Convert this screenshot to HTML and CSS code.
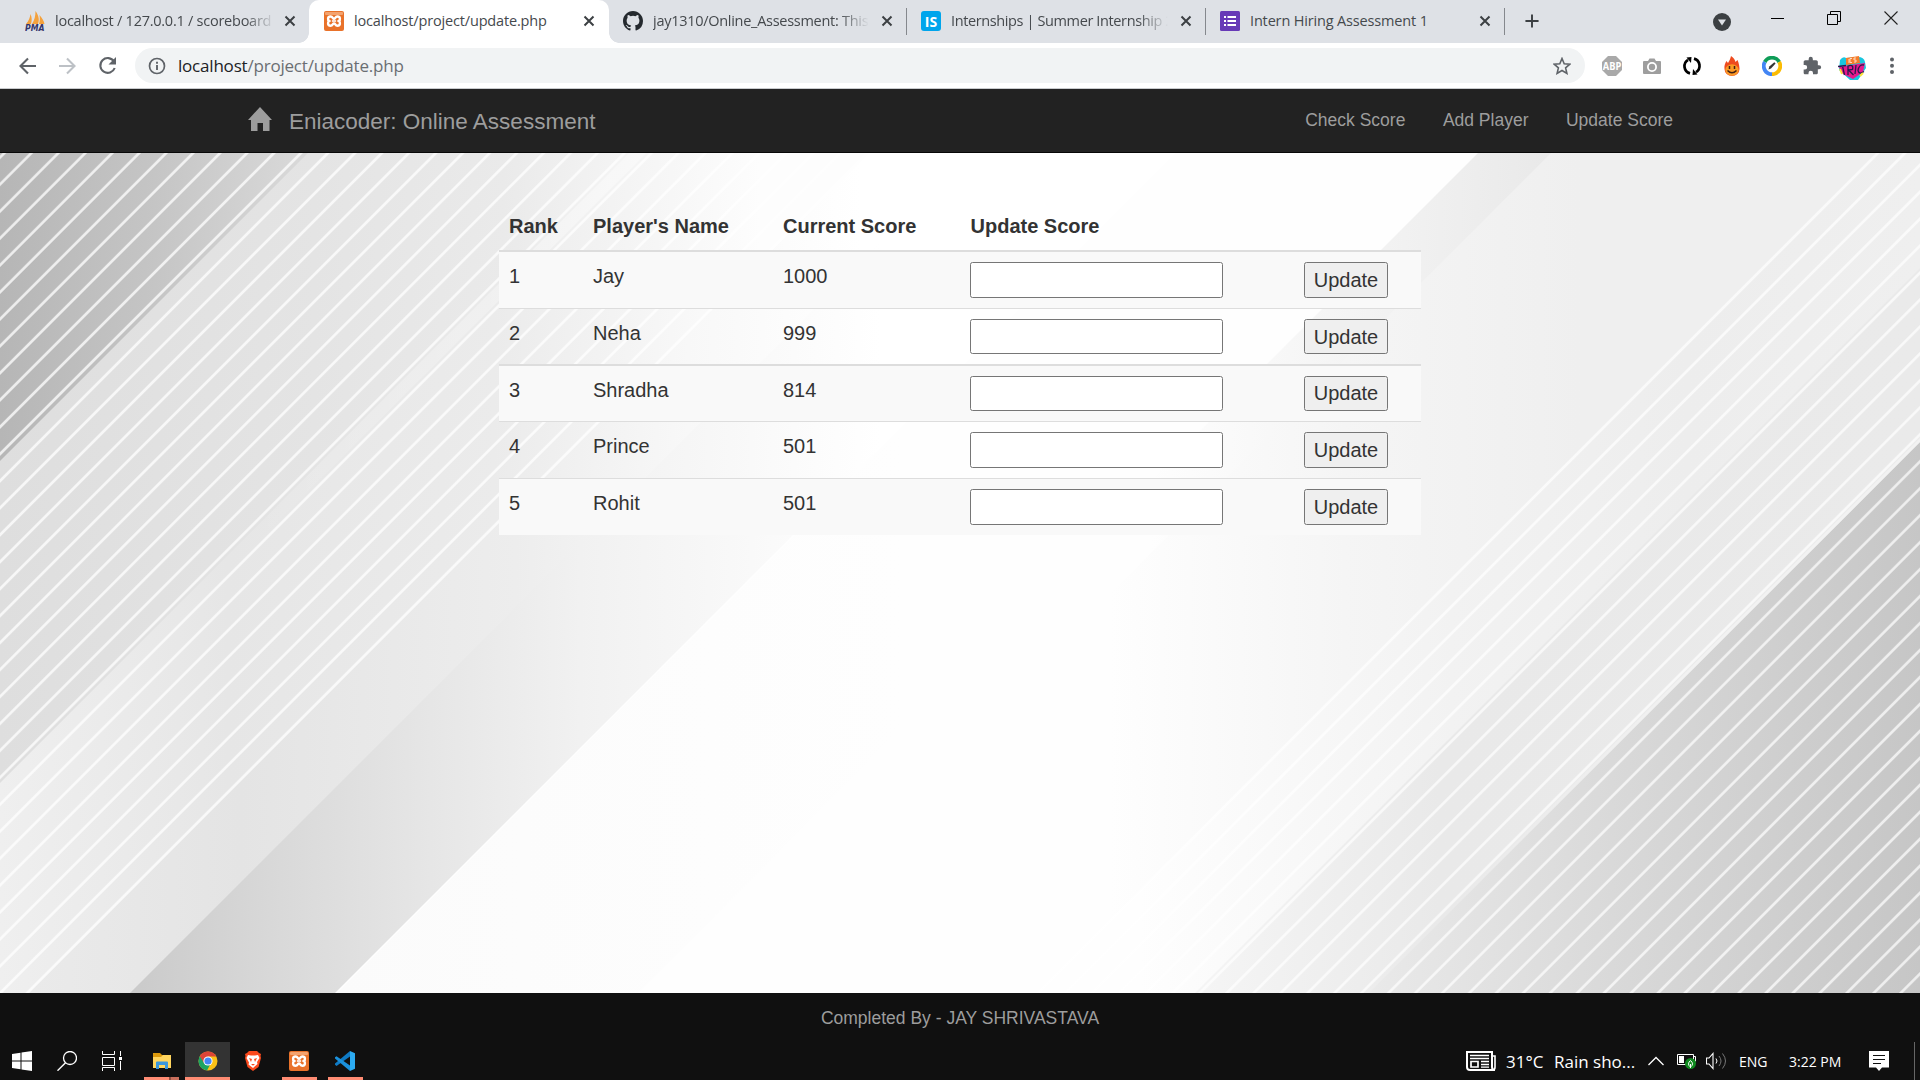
FILE: index.html
```html
<!DOCTYPE html>
<html lang="en">
<head>
<meta charset="utf-8">
<title>localhost/project/update.php</title>
<link rel="stylesheet" href="styles.css">
</head>
<body>
<svg class="defs" width="0" height="0" aria-hidden="true">
  <defs>
    <symbol id="x" viewBox="0 0 12 12"><path d="M1.500 1.500l9 9M10.500 1.500l-9 9" stroke="#3c4043" stroke-width="2" fill="none"/></symbol>
    <symbol id="xampp" viewBox="0 0 20 20"><rect width="20" height="20" rx="2" fill="#e9722a"/><rect x="1" y="1" width="18" height="3" rx="1" fill="#f3a36f"/><path d="M6.500 5.500C3.500 5.500 3.500 9 5.200 10C3.500 11 3.500 14.800 6.500 14.800C9 14.800 8.500 12.500 10 12.500S11 14.800 13.500 14.800C16.500 14.800 16.500 11 14.800 10C16.500 9 16.500 5.500 13.500 5.500C11 5.500 11.500 7.800 10 7.800S9 5.500 6.500 5.500Z" fill="none" stroke="#fff" stroke-width="2.400"/><path d="M8 10h4" stroke="#fff" stroke-width="1.600"/></symbol>
  </defs>
</svg>
<div class="screen">
  <header class="tabs">
    <div class="tab first"><svg class="fav" viewBox="0 0 20 20"><path d="M1 13C4 10 5 6 5.500 3C7 6 7 10 6 13ZM7 13C9.500 9 10.500 5 10.500 0C14 5 14.500 9 13 13ZM14 13C15 10 15 7 14.500 4C17 7 19 10 19.500 13Z" fill="#f4a13c"/><text x="0" y="19.500" class="pma" textLength="19.500" lengthAdjust="spacingAndGlyphs">PMA</text></svg><span class="label fade t1">localhost / 127.0.0.1 / scoreboard</span><svg class="close"><use href="#x"/></svg></div>
    <div class="tab active"><svg class="fav" viewBox="0 0 20 20"><use href="#xampp"/></svg><span class="label t2">localhost/project/update.php</span><svg class="close"><use href="#x"/></svg></div>
    <div class="tab sep third"><svg class="fav" viewBox="0 0 16 16"><path fill="#24292e" d="M8 0C3.580 0 0 3.580 0 8c0 3.540 2.290 6.530 5.470 7.590.4.070.55-.17.55-.38 0-.19-.01-.82-.01-1.490-2.010.37-2.530-.49-2.690-.94-.09-.23-.48-.94-.82-1.130-.28-.15-.68-.52-.01-.53.63-.01 1.080.58 1.230.82.72 1.210 1.870.87 2.330.66.07-.52.28-.87.51-1.070-1.780-.2-3.640-.89-3.640-3.950 0-.87.31-1.590.82-2.150-.08-.2-.36-1.020.08-2.120 0 0 .67-.21 2.200.82a7.600 7.600 0 0 1 4 0c1.530-1.040 2.200-.82 2.200-.82.44 1.100.16 1.920.08 2.120.51.56.82 1.270.82 2.150 0 3.070-1.870 3.750-3.650 3.950.29.25.54.73.54 1.480 0 1.070-.01 1.930-.01 2.200 0 .21.15.46.55.38A8 8 0 0 0 16 8c0-4.420-3.580-8-8-8z"/></svg><span class="label fade t3">jay1310/Online_Assessment: This</span><svg class="close"><use href="#x"/></svg></div>
    <div class="tab sep"><svg class="fav" viewBox="0 0 20 20"><rect width="20" height="20" rx="3" fill="#00a5ec"/><text x="10" y="15.500" text-anchor="middle" class="is">IS</text></svg><span class="label fade t4">Internships | Summer Internship 2</span><svg class="close"><use href="#x"/></svg></div>
    <div class="tab sep"><svg class="fav" viewBox="0 0 20 20"><rect width="20" height="20" rx="1.500" fill="#673ab7"/><path d="M4 6h2M4 10h2M4 14h2M7.500 6H16M7.500 10H16M7.500 14H16" stroke="#fff" stroke-width="2.200"/></svg><span class="label t2">Intern Hiring Assessment 1</span><svg class="close"><use href="#x"/></svg></div>
    <svg class="plus" viewBox="0 0 16 16"><path d="M8 0.500v15M.5 8h15" stroke="#3c4043" stroke-width="2.200"/></svg>
    <div class="window">
      <svg width="18" height="18" viewBox="0 0 18 18" class="drop"><circle cx="9" cy="9" r="9" fill="#3c4043"/><path d="M5 6.500h8L9 12.500z" fill="#dee1e6"/></svg>
      <svg width="13" height="13" viewBox="0 0 13 13"><path d="M0 7.500h13" stroke="#000"/></svg>
      <svg width="14" height="14" viewBox="0 0 14 14"><path d="M.5 3.500h10v10H.5zM3.500 3.500v-3h10v10h-3" fill="none" stroke="#000"/></svg>
      <svg width="14" height="14" viewBox="0 0 14 14"><path d="M.5.5l13 13M13.500.5l-13 13" stroke="#222" stroke-width="1.100"/></svg>
    </div>
  </header>
  <div class="toolbar">
    <svg class="nav" viewBox="0 0 20 20"><path d="M18 10H3M10 2.500L2.500 10l7.500 7.500" fill="none" stroke="#5f6368" stroke-width="2.100"/></svg>
    <svg class="nav" viewBox="0 0 20 20"><path d="M1 10h15M9 2.500l7.500 7.500-7.500 7.500" fill="none" stroke="#bdc1c6" stroke-width="2.100"/></svg>
    <svg class="nav" viewBox="0 0 20 20"><path d="M16 5.500A7.400 7.400 0 1 0 16.700 12" fill="none" stroke="#5f6368" stroke-width="2.100"/><path d="M18 1v7.500H10.500z" fill="#5f6368"/></svg>
    <div class="omnibox">
      <svg class="info" viewBox="0 0 18 18"><circle cx="9" cy="9" r="7.500" fill="none" stroke="#5f6368" stroke-width="1.700"/><path d="M9 8v5M9 4.800v1.900" stroke="#5f6368" stroke-width="1.900"/></svg>
      <span class="url"><b>localhost</b>/project/update.php</span>
      <svg class="star" viewBox="0 0 18 18"><path d="M9 1.500l2.200 5.200 5.700.5-4.300 3.700 1.300 5.500L9 13.500l-4.900 2.900 1.300-5.500L1.100 7.200l5.700-.5z" fill="none" stroke="#5f6368" stroke-width="1.600"/></svg>
    </div>
    <div class="extensions">
      <svg viewBox="0 0 20 20"><path d="M6 0h8l6 6v8l-6 6H6l-6-6V6z" fill="#a9a9a9"/><text x=".8" y="14" class="abp" textLength="18.400" lengthAdjust="spacingAndGlyphs">ABP</text></svg>
      <svg viewBox="0 0 20 20"><path d="M2 5h4l1.500-2.500h5L14 5h4q1 0 1 1v11q0 1-1 1H2q-1 0-1-1V6q0-1 1-1z" fill="#9e9e9e"/><circle cx="10" cy="11" r="4.100" fill="#9e9e9e" stroke="#fff" stroke-width="1.800"/></svg>
      <svg viewBox="0 0 20 20"><path d="M8 17.400A7.500 7.500 0 0 1 6 3.800M12 2.600A7.500 7.500 0 0 1 14 16.200" fill="none" stroke="#000" stroke-width="2.700"/><path d="M4.500 1.500L9.500 1l-.5 6zM15.500 18.500l-5 .5.500-6z"/></svg>
      <svg viewBox="0 0 20 20"><path d="M9 0c3 2 4 4 4.500 6L15.500 4C17 7 17.500 11 17.500 13A7.500 7 0 0 1 2.500 13C2 10 3 7 4.500 5L6 7C7 5 8.500 3 9 0z" fill="#ee4b1f"/><ellipse cx="10" cy="14" rx="6.700" ry="5.700" fill="#fb9a26"/><path d="M7.500 10v3M12.500 10v3M5.500 14.500q4.500 4.500 9 0" stroke="#402014" stroke-width="1.500" fill="none"/></svg>
      <svg viewBox="0 0 20 20"><g fill="none" stroke-width="3.800"><path d="M2.800 6A8.200 8.200 0 0 1 17.200 6" stroke="#0f9d58"/><path d="M17.200 6A8.200 8.200 0 0 1 10 18.200" stroke="#fbbc04"/><path d="M10 18.200A8.200 8.200 0 0 1 2.800 6" stroke="#4285f4"/></g><path d="M6.500 13.500l.8-3 5-4.300 1.300 1.300-4.600 5z" fill="#333"/></svg>
      <svg viewBox="0 0 24 24"><path fill="#5f6368" d="M20.500 11H19V7c0-1.100-.9-2-2-2h-4V3.500a2.500 2.500 0 0 0-5 0V5H4c-1.100 0-2 .9-2 2v3.800h1.500a2.700 2.700 0 0 1 0 5.400H2V20c0 1.100.9 2 2 2h3.800v-1.500a2.700 2.700 0 0 1 5.400 0V22H17c1.100 0 2-.9 2-2v-4h1.500a2.500 2.500 0 0 0 0-5z"/></svg>
      <svg viewBox="0 0 28 28" class="avatar"><path d="M2 8q3-4 6-2l12-1q6 0 7 5l1 6-8 12h-8L1 18z" fill="#19c6df"/><path d="M8 6l13-2 1 7-14 2z" fill="#f57c2c"/><path d="M11 7v4m3-4.500h-2v4h2m4-4.500h-2v2h2v2h-2" stroke="#ffe4cc" stroke-width=".9" fill="none"/><path d="M1 15l12-2 14-2-2 9-10 7-10-5z" fill="#e6188c"/><path d="M0 14.500l8-1M4.500 14l2 9M10 23v-9q6-2 4.500 3.500L10.500 18l5 5M18 13l-1 9M26 13q-5-1-6 5.500 1 4.500 6 1" stroke="#28194d" stroke-width="1.300" fill="none"/><path d="M2 17l2 5M22 24l3-3" stroke="#ffe233" stroke-width="2"/></svg>
      <svg viewBox="0 0 20 20"><g fill="#5f6368"><circle cx="10" cy="3.500" r="2"/><circle cx="10" cy="9.800" r="2"/><circle cx="10" cy="16" r="2"/></g></svg>
    </div>
  </div>
  <nav class="navbar">
    <div class="container">
      <a class="brand"><svg class="home" viewBox="0 0 24 24"><path d="M12 0l12 13h-2.500v11h-6.500v-8H9.500v8H3V13H0z" fill="#9d9d9d"/></svg><span>Eniacoder: Online Assessment</span></a>
      <div class="links"><a>Check Score</a><a>Add Player</a><a>Update Score</a></div>
    </div>
  </nav>
  <main class="page">
    <svg class="backdrop" viewBox="0 153 1920 840">
      <defs>
        <linearGradient id="g1" gradientUnits="userSpaceOnUse" x1="0" x2="310" y1="0" y2="0"><stop stop-color="#b6b6b6"/><stop offset=".5" stop-color="#c5c5c5"/><stop offset="1" stop-color="#dadada"/></linearGradient>
        <linearGradient id="g2" gradientUnits="userSpaceOnUse" x1="0" x2="700" y1="0" y2="0"><stop stop-color="#dedede"/><stop offset=".45" stop-color="#e4e4e4"/><stop offset=".72" stop-color="#eaeaea"/><stop offset="1" stop-color="#fbfbfb"/></linearGradient>
        <linearGradient id="g3" gradientUnits="userSpaceOnUse" x1="0" x2="760" y1="0" y2="0"><stop stop-color="#efefef"/><stop offset=".3" stop-color="#e6e6e6"/><stop offset=".65" stop-color="#ebebeb"/><stop offset="1" stop-color="#fdfdfd"/></linearGradient>
        <linearGradient id="g4" gradientUnits="userSpaceOnUse" x1="0" x2="860" y1="0" y2="0"><stop stop-color="#ebebeb"/><stop offset=".28" stop-color="#e4e4e4"/><stop offset=".6" stop-color="#ededed"/><stop offset=".8" stop-color="#f8f8f8"/><stop offset="1" stop-color="#fff"/></linearGradient>
        <linearGradient id="g5" gradientUnits="userSpaceOnUse" x1="130" x2="880" y1="0" y2="0"><stop stop-color="#cacaca"/><stop offset=".2" stop-color="#d9d9d9"/><stop offset=".4" stop-color="#e6e6e6"/><stop offset=".6" stop-color="#f1f1f1"/><stop offset=".8" stop-color="#f8f8f8"/><stop offset="1" stop-color="#fff"/></linearGradient>
        <linearGradient id="g6" gradientUnits="userSpaceOnUse" x1="335" x2="900" y1="0" y2="0"><stop stop-color="#fbfbfb"/><stop offset="1" stop-color="#fefefe"/></linearGradient>
        <linearGradient id="h1" gradientUnits="userSpaceOnUse" x1="1150" x2="1550" y1="0" y2="0"><stop stop-color="#fefefe"/><stop offset=".5" stop-color="#f4f4f4"/><stop offset="1" stop-color="#e9e9e9"/></linearGradient>
        <linearGradient id="h2" gradientUnits="userSpaceOnUse" x1="1110" x2="1580" y1="0" y2="0"><stop stop-color="#fefefe"/><stop offset=".5" stop-color="#f5f5f5"/><stop offset="1" stop-color="#efefef"/></linearGradient>
        <linearGradient id="h3" gradientUnits="userSpaceOnUse" x1="1140" x2="1920" y1="0" y2="0"><stop stop-color="#fefefe"/><stop offset=".4" stop-color="#f2f2f2"/><stop offset=".7" stop-color="#ededed"/><stop offset="1" stop-color="#efefef"/></linearGradient>
        <linearGradient id="h4" gradientUnits="userSpaceOnUse" x1="1180" x2="1920" y1="0" y2="0"><stop stop-color="#f6f6f6"/><stop offset=".35" stop-color="#e9e9e9"/><stop offset="1" stop-color="#eaeaea"/></linearGradient>
        <linearGradient id="h5" gradientUnits="userSpaceOnUse" x1="1360" x2="1920" y1="0" y2="0"><stop stop-color="#eaeaea"/><stop offset=".45" stop-color="#d9d9d9"/><stop offset="1" stop-color="#c6c6c6"/></linearGradient>
        <linearGradient id="edge" gradientUnits="userSpaceOnUse" x1="1450" x2="1700" y1="0" y2="0"><stop stop-color="#f2f2f2" stop-opacity="0"/><stop offset="1" stop-color="#f2f2f2"/></linearGradient>
        <linearGradient id="streak" gradientUnits="userSpaceOnUse" x1="250" x2="600" y1="0" y2="0"><stop stop-color="#fff" stop-opacity="0"/><stop offset="1" stop-color="#fff" stop-opacity=".4"/></linearGradient>
        <linearGradient id="sl" gradientUnits="userSpaceOnUse" spreadMethod="repeat" x1="0" y1="1017.500" x2="13.480" y2="1030.980"><stop stop-color="#fff" stop-opacity="0"/><stop offset=".06" stop-color="#fff" stop-opacity=".75"/><stop offset=".14" stop-color="#fff" stop-opacity=".75"/><stop offset=".2" stop-color="#fff" stop-opacity="0"/><stop offset="1" stop-color="#fff" stop-opacity="0"/></linearGradient>
        <linearGradient id="sr" gradientUnits="userSpaceOnUse" spreadMethod="repeat" x1="1920" y1="108.300" x2="1933.480" y2="121.780"><stop stop-color="#fff" stop-opacity="0"/><stop offset=".06" stop-color="#fff" stop-opacity=".7"/><stop offset=".14" stop-color="#fff" stop-opacity=".7"/><stop offset=".2" stop-color="#fff" stop-opacity="0"/><stop offset="1" stop-color="#fff" stop-opacity="0"/></linearGradient>
      </defs>
      <rect x="0" y="153" width="1920" height="840" fill="#fefefe"/>
      <path d="M0 1330L1330 0H1631L631 1000H0z" fill="url(#g6)"/>
      <path d="M0 1328L1328 0H0z" fill="url(#g5)"/>
      <path d="M0 1123L1123 0H0z" fill="url(#g4)"/>
      <path d="M0 1022L1022 0H0z" fill="url(#g3)"/>
      <path d="M0 783L783 0H0z" fill="url(#g2)"/>
      <path d="M0 791L791 0" stroke="url(#streak)" stroke-width="12"/>
      <path d="M0 461L461 0H0z" fill="url(#g1)"/>
      <path d="M0 1023L1023 0H0z" fill="url(#sl)"/>
      <path d="M1631 0L631 1000H1920V0z" fill="url(#h1)"/>
      <path d="M1704 0L704 1000H1920V0z" fill="url(#h2)"/>
      <path d="M2031 0L1031 1000H1920V0z" fill="url(#h3)"/>
      <path d="M2188 0L1188 1000H1920V0z" fill="url(#h4)"/>
      <path d="M2362 0L1362 1000H1920V0z" fill="url(#h5)"/>
      <path d="M2028 0L1028 1000H1920V0z" fill="url(#sr)"/>
      <path d="M2360 0L1360 1000" stroke="url(#edge)" stroke-width="3"/>
    </svg>
    <div class="content">
      <table class="scores">
        <colgroup><col class="c1"><col class="c2"><col class="c3"><col class="c4"><col class="c5"></colgroup>
        <thead><tr><th>Rank</th><th>Player's Name</th><th>Current Score</th><th>Update Score</th><th></th></tr></thead>
        <tbody>
          <tr><td>1</td><td>Jay</td><td>1000</td><td><input type="text"></td><td><button>Update</button></td></tr>
          <tr><td>2</td><td>Neha</td><td>999</td><td><input type="text"></td><td><button>Update</button></td></tr>
          <tr><td>3</td><td>Shradha</td><td>814</td><td><input type="text"></td><td><button>Update</button></td></tr>
          <tr><td>4</td><td>Prince</td><td>501</td><td><input type="text"></td><td><button>Update</button></td></tr>
          <tr><td>5</td><td>Rohit</td><td>501</td><td><input type="text"></td><td><button>Update</button></td></tr>
        </tbody>
      </table>
    </div>
  </main>
  <footer class="credits">Completed By - JAY SHRIVASTAVA</footer>
  <div class="taskbar">
    <div class="apps">
      <span class="app win"><svg viewBox="0 0 20 20"><path d="M0 3l8.500-1.200V9.500H0zM9.500 1.600L20 0v9.500H9.500zM0 10.500h8.500v7.800L0 17zM9.500 10.500H20V20L9.500 18.500z" fill="#fff"/></svg></span>
      <span class="app"><svg viewBox="0 0 20 20"><circle cx="13" cy="7" r="6.500" fill="none" stroke="#fff" stroke-width="1.300"/><path d="M8.500 11.700L.5 19.700" stroke="#fff" stroke-width="1.400"/></svg></span>
      <span class="app"><svg viewBox="0 0 20 20"><path d="M.5 0v3.500h12V0M.5 20v-3.500h12V20M.5 6.500h12v8H.5zM18.500 0v5M18.500 10v9" fill="none" stroke="#fff"/><rect x="17" y="6" width="3" height="3" fill="#fff"/></svg></span>
      <span class="app open stacked"><svg viewBox="0 0 20 20"><path d="M1 2h7l2 2h9v5H1z" fill="#dd9a0c"/><path d="M1 6h8l2-2h8v13H1z" fill="#ffd55e"/><path d="M4 18v-6.500q0-1 1-1h10q1 0 1 1V18h-3v-4H7v4z" fill="#3a97dc"/></svg></span>
      <span class="app open current"><svg viewBox="0 0 20 20"><circle cx="10" cy="10" r="9.500" fill="#fbc116"/><path d="M10 10L1.800 5.200A9.500 9.500 0 0 0 9 19.500l4-7.500z" fill="#1da462"/><path d="M10 5.500h8.300A9.500 9.500 0 0 0 1.800 5.200L6 12z" fill="#dc4437"/><circle cx="10" cy="10" r="4.600" fill="#fff"/><circle cx="10" cy="10" r="3.600" fill="#4386f5"/></svg></span>
      <span class="app"><svg viewBox="0 0 20 20"><path d="M6 0h8l2 2 2 1-.5 2 .5 2-2.500 9L10 20l-5.500-4L2 7l.5-2L2 3l2-1z" fill="#fb4a1d"/><path d="M5 4l3 .5h4l3-.5 1.500 3-2.500 4 .5 2L10 17l-4.500-3.500.5-2L3.500 7z" fill="#fff"/><path d="M6 7l3 1-1 3zM14 7l-3 1 1 3zM8 13h4l-2 1.800z" fill="#fb4a1d"/></svg></span>
      <span class="app open"><svg viewBox="0 0 20 20"><use href="#xampp"/></svg></span>
      <span class="app open"><svg viewBox="0 0 20 20"><path d="M15 0v5.500L1.500 15 0 13.800v-1.200z" fill="#0f7ac4"/><path d="M0 6.200l1.500-.9L15 14.500V20L0 7.400z" fill="#1b91dc"/><path d="M15 0l5 2.300v15.400L15 20z" fill="#2cabf2"/></svg></span>
    </div>
    <div class="tray">
      <svg class="news" viewBox="0 0 30 20"><path d="M1 1h25v15q0 3 3 3H4q-3 0-3-3z" fill="none" stroke="#fff" stroke-width="2"/><path d="M26 5h3v11q0 3-2 3" fill="none" stroke="#fff" stroke-width="1.600"/><path d="M4 4.500h19M4 7.500h19M15 10.500h8M15 13.500h8M15 16.200h8" stroke="#fff" stroke-width="1.300"/><path d="M5 10.500h7v5.500H5z" fill="none" stroke="#fff" stroke-width="1.700"/></svg>
      <span class="temp">31°C</span><span class="rain">Rain sho...</span>
      <svg class="chev" viewBox="0 0 16 10"><path d="M.5 9L8 1.500 15.500 9" fill="none" stroke="#fff" stroke-width="1.300"/></svg>
      <svg class="batt" viewBox="0 0 20 16"><path d="M.5 1.500h16v10H.5zM17 3.500h1.500v5" fill="none" stroke="#fff"/><path d="M2 3h5v7H2z" fill="#fff"/><circle cx="13.500" cy="10.500" r="5.500" fill="#0f8a1f"/><path d="M13.500 7.500q4 3.500 0 6.500q-4-3 0-6.500M13.500 11v4" fill="none" stroke="#fff"/></svg>
      <svg class="vol" viewBox="0 0 21 18"><path d="M.5 6H3l4-4.500v15L3 12H.5z" fill="none" stroke="#fff" stroke-width="1.100"/><path d="M10 6.500q2 2.500 0 5" fill="none" stroke="#fff"/><path d="M13 4q4 5 0 10M16.500 1.500q6 7.500 0 15" fill="none" stroke="#777"/></svg>
      <span class="eng">ENG</span><span class="time">3:22 PM</span>
      <svg class="note" viewBox="0 0 20 20"><path d="M0 0h20v16.500h-7L10 20l-3-3.500H0z" fill="#fff"/><path d="M4 4.500h12M4 8.500h12M4 12.500h8" stroke="#101010" stroke-width="1.200"/></svg>
      <i class="peek"></i>
    </div>
  </div>
</div>
</body>
</html>
```
FILE: styles.css
```css
* { box-sizing: border-box; }
body { margin: 0; background: #101010; font-family: "Liberation Sans", Arial, sans-serif; color: #333; overflow: hidden; }
svg { display: block; flex: none; }
.defs { position: absolute; }
.screen { width: 1920px; height: 1080px; display: flex; flex-direction: column; }

.tabs { height: 43px; background: #dee1e6; display: flex; font-family: "Open Sans", "Noto Sans", sans-serif; font-size: 14.5px; color: #45494d; }
.tab { width: 299px; display: flex; align-items: center; padding: 0 13px 1px 14px; position: relative; }
.tab.first { width: 309px; padding-left: 25px; padding-right: 13px; border-bottom-right-radius: 10px; }
.tab.active { width: 300px; padding-left: 15px; padding-right: 14px; background: #fff; border-radius: 10px 10px 0 0; }
.tab.active::before, .tab.active::after { content: ""; position: absolute; bottom: 0; width: 10px; height: 10px; }
.tab.active::before { left: -10px; background: radial-gradient(circle at 0 0, transparent 9.5px, #fff 10px); }
.tab.active::after { right: -10px; background: radial-gradient(circle at 100% 0, transparent 9.5px, #fff 10px); }
.tab.sep { border-right: 1px solid #85888d; border-image: linear-gradient(transparent 9px, #85888d 9px, #85888d 34px, transparent 34px) 1; }
.tab.third { width: 298px; }
.fav { width: 20px; height: 20px; margin-right: 10px; }
.pma { font: italic bold 8px "DejaVu Sans", sans-serif; fill: #33356b; }
.is { font: bold 14px "Open Sans", sans-serif; fill: #fff; }
.label { flex: 1; white-space: nowrap; overflow: hidden; margin-right: 8px; line-height: 22px; }
.t1 { letter-spacing: -.25px; margin-right: 5px; }
.t2 { letter-spacing: -.16px; }
.t3 { letter-spacing: -.28px; }
.t4 { letter-spacing: -.38px; }
.fade { -webkit-mask-image: linear-gradient(90deg, #000 calc(100% - 34px), transparent calc(100% - 4px)); mask-image: linear-gradient(90deg, #000 calc(100% - 34px), transparent calc(100% - 4px)); }
.close { width: 12px; height: 12px; }
.plus { width: 14px; height: 14px; margin: 14px 0 0 20px; }
.window { margin-left: auto; display: flex; padding: 11px 22px 0 0; gap: 43px; }
.window .drop { margin-right: -3px; margin-top: 2px; }

.toolbar { height: 46px; background: #fff; border-bottom: 1px solid #c9cbce; display: flex; align-items: center; padding-left: 18px; font-family: "Open Sans", "Noto Sans", sans-serif; }
.nav { width: 20px; height: 20px; margin-right: 20px; }
.omnibox { width: 1450px; height: 35px; margin-left: -3px; border-radius: 18px; background: #f1f3f4; display: flex; align-items: center; padding: 0 14px 0 13px; }
.info { width: 18px; height: 18px; margin-right: 12px; }
.url { flex: 1; font-size: 17px; letter-spacing: -.2px; color: #6a6e72; white-space: nowrap; }
.url b { font-weight: 400; color: #202124; }
.star { width: 18px; height: 18px; }
.extensions { display: flex; align-items: center; gap: 20px; margin-left: 17px; }
.extensions svg { width: 20px; height: 20px; }
.extensions .avatar { width: 28px; height: 28px; margin: 0 -4px; }
.abp { font: bold 11px "Open Sans", sans-serif; fill: #fff; }

.navbar { height: 64px; background: #222; border-bottom: 1px solid #080808; color: #9d9d9d; }
.container { width: 1462px; margin: 0 auto; padding: 0 18px 0 19px; display: flex; justify-content: space-between; }
.brand { display: flex; font-size: 22.5px; line-height: 25px; padding-top: 18px; }
.brand span { padding-top: 2px; }
.home { width: 24px; height: 24px; margin-right: 17px; }
.links { display: flex; gap: 37.5px; font-size: 17.5px; line-height: 25px; padding-top: 19px; }

.page { flex: 1; display: grid; min-height: 0; }
.backdrop { grid-area: 1 / 1; width: 1920px; height: 840px; }
.content { grid-area: 1 / 1; padding: 48px 0 0 499px; z-index: 1; }
.scores { width: 922px; table-layout: fixed; border-spacing: 0; font-size: 20px; line-height: 28px; }
.c1 { width: 84px; } .c2 { width: 190px; } .c3 { width: 187px; } .c4 { width: 334px; } .c5 { width: 127px; }
th { text-align: left; height: 49px; padding: 11px 10px 10px; vertical-align: top; }
th:nth-child(4) { padding-left: 10.5px; }
td { height: 57px; padding: 10px 10px 0; vertical-align: top; border-top: 1px solid #ddd; }
tbody tr:nth-child(1) td { height: 58px; border-top-width: 2px; }
tbody tr:nth-child(2) td { height: 56px; }
tbody tr:nth-child(3) td { border-top-width: 2px; }
tbody tr:nth-child(odd) td { background: #f9f9f9; }
input, button { display: block; height: 36px; border: 1px solid #767676; border-radius: 2.5px; font: 20px "Liberation Sans", Arial, sans-serif; color: #333; }
tr:nth-child(2) input, tr:nth-child(2) button, tr:nth-child(3) input, tr:nth-child(3) button { height: 35px; }
input { width: 253px; background: #fff; padding: 0 4px; }
button { width: 84px; background: #efefef; padding: 0; text-align: center; }
tr:nth-child(2) button { padding-top: 1px; }

.credits { height: 49px; background: #101010; color: #9d9d9d; text-align: center; font-size: 17.5px; line-height: 50px; }
.taskbar { height: 38px; background: #101010; display: flex; justify-content: space-between; color: #fff; font-family: "Open Sans", "Noto Sans", sans-serif; }
.apps { display: flex; }
.app { width: 35px; height: 38px; margin: 0 5.5px; display: flex; justify-content: center; padding-top: 9px; }
.app:first-child { margin-left: 4px; }
.app svg { width: 20px; height: 20px; }
.app:nth-child(2), .app:nth-child(3) { margin: 0 5px; }
.app:nth-child(4) { margin: 0 6px 0 9.5px; }
.app.open { border-bottom: 3px solid #ff8c73; }
.app.stacked { border-image: linear-gradient(90deg, #ff8c73 24px, #8f4f41 24px, #8f4f41 25px, #c96f5c 25px) 3; }
.app.current { width: 45px; margin: 0; background: #333; }
.tray { display: flex; align-items: center; }
.news { width: 30px; height: 20px; margin-right: 10px; }
.temp { width: 48px; font-size: 17px; }
.rain { width: 94px; font-size: 17px; white-space: nowrap; }
.chev { width: 16px; height: 10px; margin-right: 13px; }
.batt { width: 20px; height: 16px; margin-right: 9px; }
.vol { width: 21px; height: 18px; margin-right: 12px; }
.eng { width: 50px; font-size: 14px; }
.time { width: 80px; font-size: 14px; white-space: nowrap; }
.note { width: 20px; height: 20px; margin-right: 25px; }
.peek { width: 6px; height: 38px; border-left: 1px solid #666; }
```
